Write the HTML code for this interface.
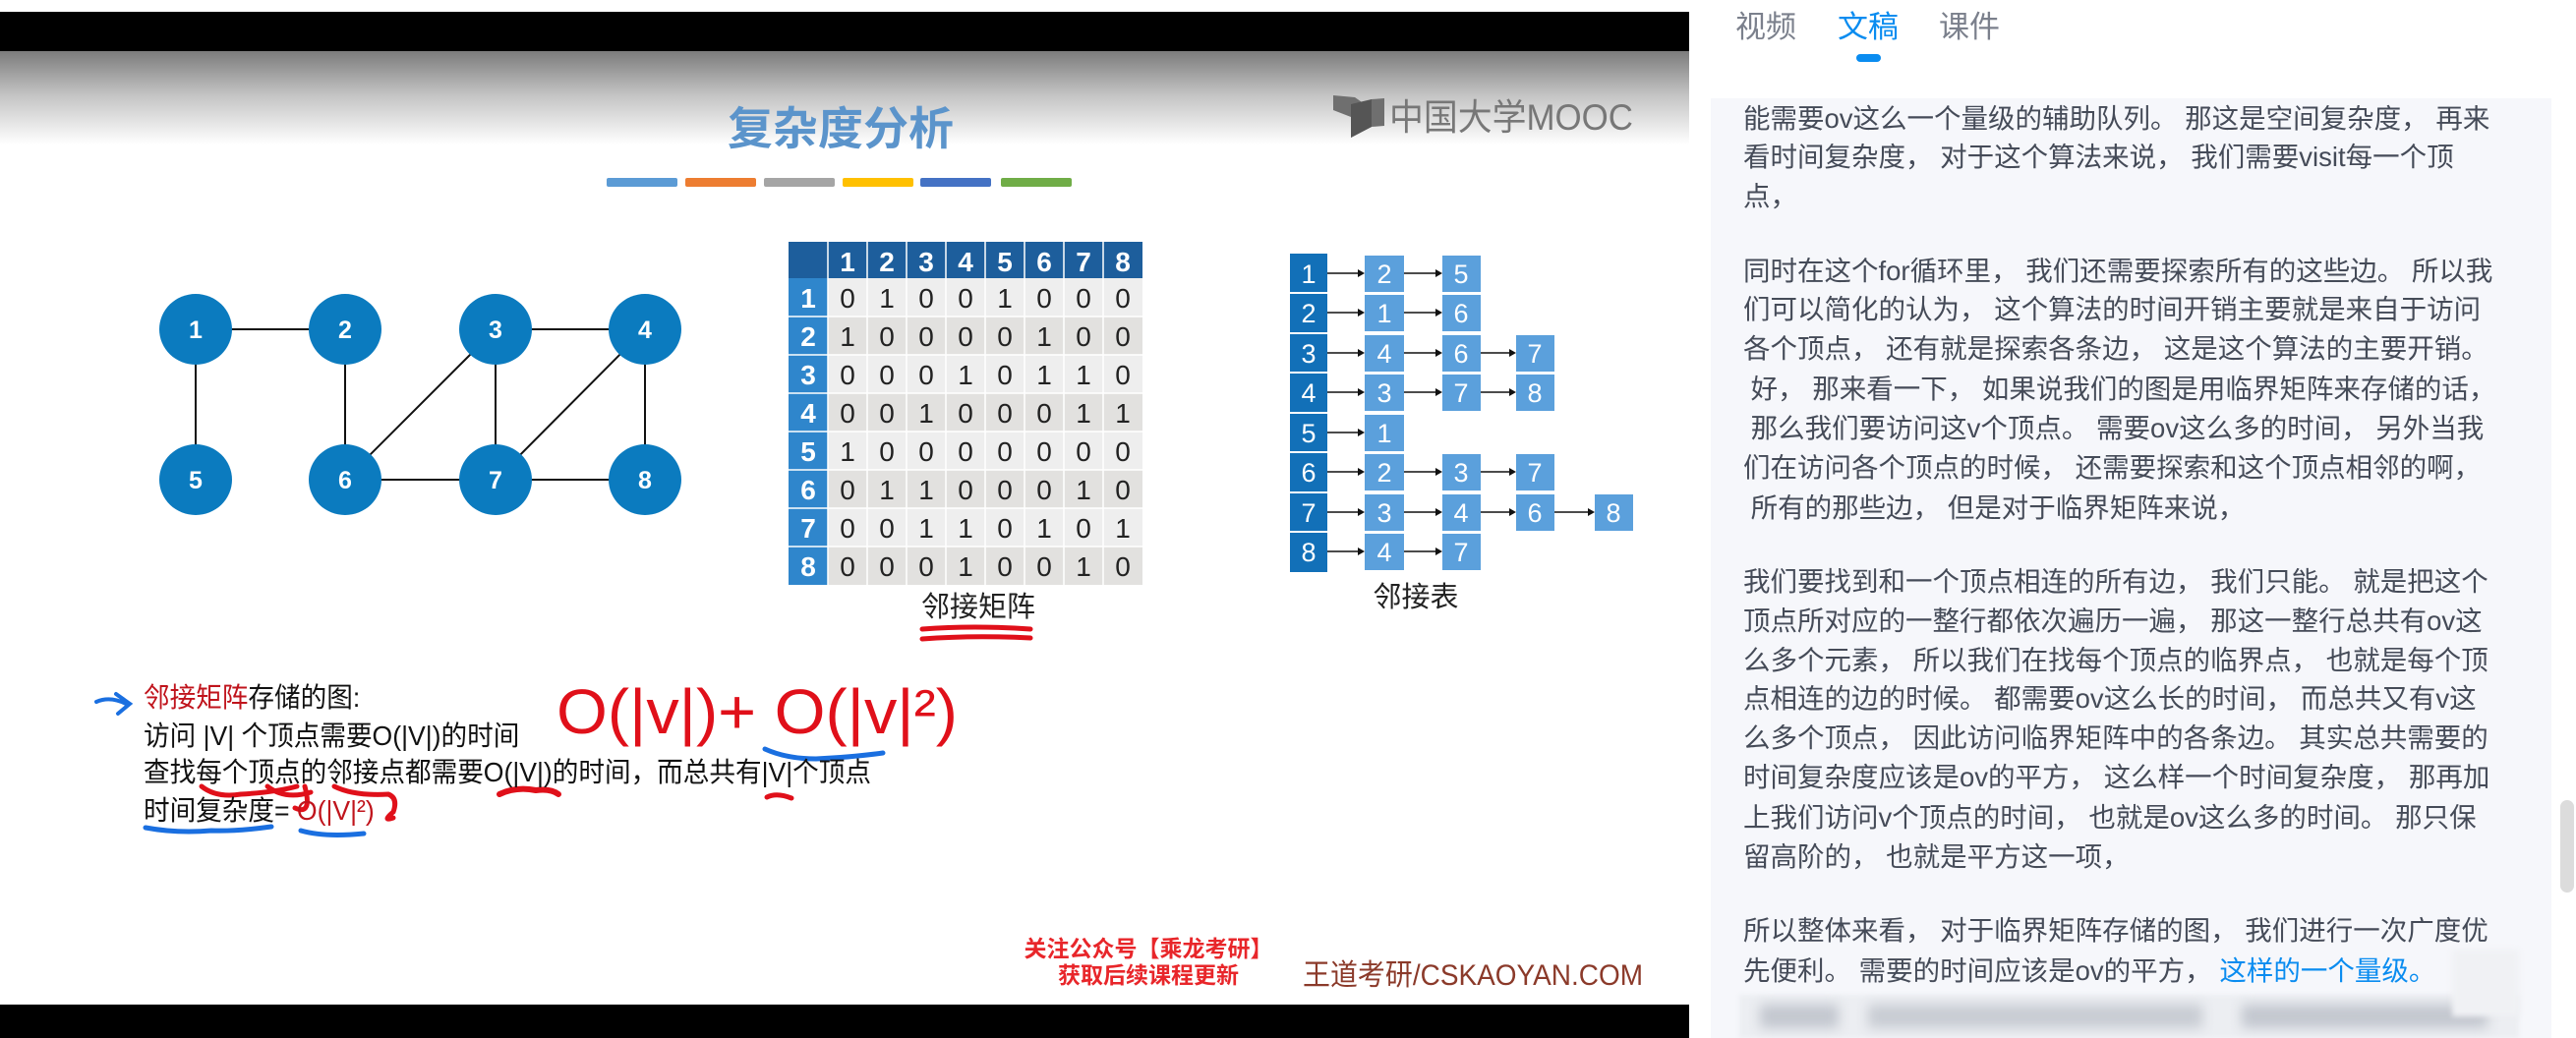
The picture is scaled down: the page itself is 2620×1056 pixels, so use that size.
<!DOCTYPE html>
<html><head><meta charset="utf-8">
<style>
*{margin:0;padding:0;box-sizing:border-box}
body{width:2620px;height:1056px;background:#fff;position:relative;overflow:hidden;font-family:"Liberation Sans","Noto Sans CJK SC",sans-serif}
.abs{position:absolute;white-space:nowrap}
#video{position:absolute;left:0;top:12px;width:1718px;height:1044px;background:#000}
#slide{position:absolute;left:0;top:52px;width:1718px;height:970px;background:linear-gradient(#7c7c7c 0px,#c4c4c4 45px,#fff 95px,#fff)}
.t{font-family:"Liberation Sans","Noto Sans CJK SC",sans-serif;font-size:27.5px;color:#454b58;line-height:40px;position:absolute;left:1773px;white-space:nowrap}
.s{font-size:28px;color:#111;position:absolute;white-space:nowrap;line-height:32px;font-family:"Liberation Sans","Noto Sans CJK SC",sans-serif;transform:scaleX(0.95);transform-origin:left}
</style></head><body>
<div id="video"></div>
<div id="slide"></div>
<svg class="abs" style="left:0;top:0" width="1718" height="1056" font-family="Liberation Sans, Noto Sans CJK SC, sans-serif">
<text x="855" y="147" text-anchor="middle" font-size="46" font-weight="bold" fill="#5b94cb">复杂度分析</text>
<path d="M1356 97 L1378 99 L1388 106 L1395 101 L1408 100 L1408 128 L1395 129 L1374 140 L1374 119 L1356 112 Z" fill="#6f6f6f"/>
<path d="M1374 106 L1395 101 L1395 129 L1374 140 Z" fill="#555"/>
<text x="1413" y="132" font-size="37" fill="#777" textLength="248" lengthAdjust="spacingAndGlyphs">中国大学MOOC</text>
<rect x="617" y="181" width="72" height="9" rx="2" fill="#5b9bd5"/>
<rect x="697" y="181" width="72" height="9" rx="2" fill="#ed7d31"/>
<rect x="777" y="181" width="72" height="9" rx="2" fill="#a5a5a5"/>
<rect x="857" y="181" width="72" height="9" rx="2" fill="#ffc000"/>
<rect x="936" y="181" width="72" height="9" rx="2" fill="#4472c4"/>
<rect x="1018" y="181" width="72" height="9" rx="2" fill="#70ad47"/>
<g stroke="#111" stroke-width="2">
<line x1="199" y1="335" x2="351" y2="335"/><line x1="199" y1="335" x2="199" y2="488"/>
<line x1="351" y1="335" x2="351" y2="488"/><line x1="504" y1="335" x2="656" y2="335"/>
<line x1="504" y1="335" x2="351" y2="488"/><line x1="504" y1="335" x2="504" y2="488"/>
<line x1="656" y1="335" x2="504" y2="488"/><line x1="656" y1="335" x2="656" y2="488"/>
<line x1="351" y1="488" x2="656" y2="488"/>
</g>
<g fill="#0b7bbf">
<ellipse cx="199" cy="335" rx="37" ry="36"/><ellipse cx="351" cy="335" rx="37" ry="36"/>
<ellipse cx="504" cy="335" rx="37" ry="36"/><ellipse cx="656" cy="335" rx="37" ry="36"/>
<ellipse cx="199" cy="488" rx="37" ry="36"/><ellipse cx="351" cy="488" rx="37" ry="36"/>
<ellipse cx="504" cy="488" rx="37" ry="36"/><ellipse cx="656" cy="488" rx="37" ry="36"/>
</g>
<g fill="#fff" font-size="25" font-weight="bold" text-anchor="middle">
<text x="199" y="344">1</text><text x="351" y="344">2</text><text x="504" y="344">3</text><text x="656" y="344">4</text>
<text x="199" y="497">5</text><text x="351" y="497">6</text><text x="504" y="497">7</text><text x="656" y="497">8</text>
</g>
<rect x="802" y="246" width="360" height="37" fill="#1d5e9c"/>
<rect x="802" y="283" width="40" height="312" fill="#2f86cc"/>
<g fill="#eeeeee"><rect x="842" y="283" width="320" height="39"/><rect x="842" y="361" width="320" height="39"/><rect x="842" y="439" width="320" height="39"/><rect x="842" y="517" width="320" height="39"/></g>
<g fill="#e2e1df"><rect x="842" y="322" width="320" height="39"/><rect x="842" y="400" width="320" height="39"/><rect x="842" y="478" width="320" height="39"/><rect x="842" y="556" width="320" height="39"/></g>
<g stroke="#fff" stroke-width="1.5">
<line x1="842" y1="246" x2="842" y2="595"/><line x1="882" y1="246" x2="882" y2="595"/><line x1="922" y1="246" x2="922" y2="595"/><line x1="962" y1="246" x2="962" y2="595"/><line x1="1002" y1="246" x2="1002" y2="595"/><line x1="1042" y1="246" x2="1042" y2="595"/><line x1="1082" y1="246" x2="1082" y2="595"/><line x1="1122" y1="246" x2="1122" y2="595"/>
<line x1="802" y1="322" x2="1162" y2="322"/><line x1="802" y1="361" x2="1162" y2="361"/><line x1="802" y1="400" x2="1162" y2="400"/><line x1="802" y1="439" x2="1162" y2="439"/><line x1="802" y1="478" x2="1162" y2="478"/><line x1="802" y1="517" x2="1162" y2="517"/><line x1="802" y1="556" x2="1162" y2="556"/>
</g>
<g fill="#fff" font-size="28" font-weight="bold" text-anchor="middle">
<text x="862" y="276">1</text><text x="902" y="276">2</text><text x="942" y="276">3</text><text x="982" y="276">4</text><text x="1022" y="276">5</text><text x="1062" y="276">6</text><text x="1102" y="276">7</text><text x="1142" y="276">8</text>
<text x="822" y="313">1</text><text x="822" y="352">2</text><text x="822" y="391">3</text><text x="822" y="430">4</text><text x="822" y="469">5</text><text x="822" y="508">6</text><text x="822" y="547">7</text><text x="822" y="586">8</text>
</g>
<g fill="#222" font-size="28" text-anchor="middle" font-family="Liberation Sans Narrow, Liberation Sans, sans-serif">
<text x="862" y="313">0</text><text x="902" y="313">1</text><text x="942" y="313">0</text><text x="982" y="313">0</text><text x="1022" y="313">1</text><text x="1062" y="313">0</text><text x="1102" y="313">0</text><text x="1142" y="313">0</text>
<text x="862" y="352">1</text><text x="902" y="352">0</text><text x="942" y="352">0</text><text x="982" y="352">0</text><text x="1022" y="352">0</text><text x="1062" y="352">1</text><text x="1102" y="352">0</text><text x="1142" y="352">0</text>
<text x="862" y="391">0</text><text x="902" y="391">0</text><text x="942" y="391">0</text><text x="982" y="391">1</text><text x="1022" y="391">0</text><text x="1062" y="391">1</text><text x="1102" y="391">1</text><text x="1142" y="391">0</text>
<text x="862" y="430">0</text><text x="902" y="430">0</text><text x="942" y="430">1</text><text x="982" y="430">0</text><text x="1022" y="430">0</text><text x="1062" y="430">0</text><text x="1102" y="430">1</text><text x="1142" y="430">1</text>
<text x="862" y="469">1</text><text x="902" y="469">0</text><text x="942" y="469">0</text><text x="982" y="469">0</text><text x="1022" y="469">0</text><text x="1062" y="469">0</text><text x="1102" y="469">0</text><text x="1142" y="469">0</text>
<text x="862" y="508">0</text><text x="902" y="508">1</text><text x="942" y="508">1</text><text x="982" y="508">0</text><text x="1022" y="508">0</text><text x="1062" y="508">0</text><text x="1102" y="508">1</text><text x="1142" y="508">0</text>
<text x="862" y="547">0</text><text x="902" y="547">0</text><text x="942" y="547">1</text><text x="982" y="547">1</text><text x="1022" y="547">0</text><text x="1062" y="547">1</text><text x="1102" y="547">0</text><text x="1142" y="547">1</text>
<text x="862" y="586">0</text><text x="902" y="586">0</text><text x="942" y="586">0</text><text x="982" y="586">1</text><text x="1022" y="586">0</text><text x="1062" y="586">0</text><text x="1102" y="586">1</text><text x="1142" y="586">0</text>
</g>
<text x="995" y="627" text-anchor="middle" font-size="29" fill="#222">邻接矩阵</text>
<path d="M938 640 Q990 636 1048 640 M938 650 Q990 646 1048 649" stroke="#e0101a" stroke-width="5" fill="none" stroke-linecap="round"/>
<rect x="1312" y="258" width="38" height="324" fill="#1270b8"/>
<g stroke="#fff" stroke-width="2"><line x1="1312" y1="298" x2="1350" y2="298"/><line x1="1312" y1="339" x2="1350" y2="339"/><line x1="1312" y1="379" x2="1350" y2="379"/><line x1="1312" y1="420" x2="1350" y2="420"/><line x1="1312" y1="460" x2="1350" y2="460"/><line x1="1312" y1="501" x2="1350" y2="501"/><line x1="1312" y1="541" x2="1350" y2="541"/></g>
<g fill="#fff" font-size="27" text-anchor="middle">
<text x="1331" y="288">1</text><text x="1331" y="328">2</text><text x="1331" y="369">3</text><text x="1331" y="409">4</text><text x="1331" y="450">5</text><text x="1331" y="490">6</text><text x="1331" y="531">7</text><text x="1331" y="571">8</text>
</g>
<g fill="#5ba0dc">
<rect x="1388" y="260" width="40" height="37"/><rect x="1467" y="260" width="39" height="37"/>
<rect x="1388" y="300" width="40" height="37"/><rect x="1467" y="300" width="39" height="37"/>
<rect x="1388" y="341" width="40" height="37"/><rect x="1467" y="341" width="39" height="37"/><rect x="1542" y="341" width="39" height="37"/>
<rect x="1388" y="381" width="40" height="37"/><rect x="1467" y="381" width="39" height="37"/><rect x="1542" y="381" width="39" height="37"/>
<rect x="1388" y="422" width="40" height="37"/>
<rect x="1388" y="462" width="40" height="37"/><rect x="1467" y="462" width="39" height="37"/><rect x="1542" y="462" width="39" height="37"/>
<rect x="1388" y="503" width="40" height="37"/><rect x="1467" y="503" width="39" height="37"/><rect x="1542" y="503" width="39" height="37"/><rect x="1622" y="503" width="39" height="37"/>
<rect x="1388" y="543" width="40" height="37"/><rect x="1467" y="543" width="39" height="37"/>
</g>
<g stroke="#111" stroke-width="1.5">
<line x1="1350" y1="278" x2="1384" y2="278"/><line x1="1428" y1="278" x2="1463" y2="278"/>
<line x1="1350" y1="318" x2="1384" y2="318"/><line x1="1428" y1="318" x2="1463" y2="318"/>
<line x1="1350" y1="359" x2="1384" y2="359"/><line x1="1428" y1="359" x2="1463" y2="359"/><line x1="1506" y1="359" x2="1538" y2="359"/>
<line x1="1350" y1="399" x2="1384" y2="399"/><line x1="1428" y1="399" x2="1463" y2="399"/><line x1="1506" y1="399" x2="1538" y2="399"/>
<line x1="1350" y1="440" x2="1384" y2="440"/>
<line x1="1350" y1="480" x2="1384" y2="480"/><line x1="1428" y1="480" x2="1463" y2="480"/><line x1="1506" y1="480" x2="1538" y2="480"/>
<line x1="1350" y1="521" x2="1384" y2="521"/><line x1="1428" y1="521" x2="1463" y2="521"/><line x1="1506" y1="521" x2="1538" y2="521"/><line x1="1581" y1="521" x2="1618" y2="521"/>
<line x1="1350" y1="561" x2="1384" y2="561"/><line x1="1428" y1="561" x2="1463" y2="561"/>
</g>
<g fill="#111">
<path d="M1388 278 l-7 -4 v8z M1467 278 l-7 -4 v8z M1388 318 l-7 -4 v8z M1467 318 l-7 -4 v8z M1388 359 l-7 -4 v8z M1467 359 l-7 -4 v8z M1542 359 l-7 -4 v8z M1388 399 l-7 -4 v8z M1467 399 l-7 -4 v8z M1542 399 l-7 -4 v8z M1388 440 l-7 -4 v8z M1388 480 l-7 -4 v8z M1467 480 l-7 -4 v8z M1542 480 l-7 -4 v8z M1388 521 l-7 -4 v8z M1467 521 l-7 -4 v8z M1542 521 l-7 -4 v8z M1622 521 l-7 -4 v8z M1388 561 l-7 -4 v8z M1467 561 l-7 -4 v8z"/>
</g>
<g fill="#fff" font-size="27" text-anchor="middle">
<text x="1408" y="288">2</text><text x="1486" y="288">5</text>
<text x="1408" y="328">1</text><text x="1486" y="328">6</text>
<text x="1408" y="369">4</text><text x="1486" y="369">6</text><text x="1561" y="369">7</text>
<text x="1408" y="409">3</text><text x="1486" y="409">7</text><text x="1561" y="409">8</text>
<text x="1408" y="450">1</text>
<text x="1408" y="490">2</text><text x="1486" y="490">3</text><text x="1561" y="490">7</text>
<text x="1408" y="531">3</text><text x="1486" y="531">4</text><text x="1561" y="531">6</text><text x="1641" y="531">8</text>
<text x="1408" y="571">4</text><text x="1486" y="571">7</text>
</g>
<text x="1440" y="617" text-anchor="middle" font-size="29" fill="#222">邻接表</text>
<path d="M98 714 Q112 708 128 716 M118 706 L132 716 L120 726" stroke="#1a6fe0" stroke-width="4" fill="none" stroke-linecap="round"/>
<text x="566" y="746" font-size="64" fill="#e0101a" font-family="Liberation Sans Narrow, Liberation Sans, sans-serif" textLength="408" lengthAdjust="spacingAndGlyphs">O(|v|)+ O(|v|²)</text>
<path d="M778 762 Q800 772 830 772 Q870 770 898 766" stroke="#1a6fe0" stroke-width="5" fill="none" stroke-linecap="round"/>
<path d="M205 800 Q220 812 245 808 Q280 806 302 800 M272 800 Q290 814 316 806 M310 800 Q318 830 300 822" stroke="#e0101a" stroke-width="5" fill="none" stroke-linecap="round"/>
<path d="M340 800 Q360 810 395 808 Q405 812 400 826 Q388 836 400 832" stroke="#e0101a" stroke-width="5" fill="none" stroke-linecap="round"/>
<path d="M508 808 Q525 800 545 804 Q560 802 568 808" stroke="#e0101a" stroke-width="6" fill="none" stroke-linecap="round"/>
<path d="M780 811 Q790 806 805 812" stroke="#e0101a" stroke-width="5" fill="none" stroke-linecap="round"/>
<path d="M148 842 Q180 848 215 845 Q240 846 276 841 M306 845 Q330 852 370 848" stroke="#1a6fe0" stroke-width="5" fill="none" stroke-linecap="round"/>
<text x="1168" y="973" text-anchor="middle" font-size="23" font-weight="bold" fill="#e8262a">关注公众号【乘龙考研】</text>
<text x="1168" y="1000" text-anchor="middle" font-size="23" font-weight="bold" fill="#e8262a">获取后续课程更新</text>
<text x="1325" y="1002" font-size="30" fill="#8b3a2a" textLength="346" lengthAdjust="spacingAndGlyphs">王道考研/CSKAOYAN.COM</text>
</svg>
<div class="s" style="left:146px;top:694px"><span style="color:#c0141c">邻接矩阵</span>存储的图:</div>
<div class="s" style="left:146px;top:733px">访问 |V| 个顶点需要O(|V|)的时间</div>
<div class="s" style="left:146px;top:770px">查找每个顶点的邻接点都需要O(|V|)的时间，而总共有|V|个顶点</div>
<div class="s" style="left:146px;top:809px">时间复杂度= <span style="color:#c0141c">O(|V|²)</span></div>

<div class="abs" style="left:1765px;top:8px;font-size:31px;color:#7b808c;line-height:40px">视频</div>
<div class="abs" style="left:1869px;top:8px;font-size:31px;color:#0a8cf0;line-height:40px">文稿</div>
<div class="abs" style="left:1972px;top:8px;font-size:31px;color:#7b808c;line-height:40px">课件</div>
<div class="abs" style="left:1888px;top:55px;width:25px;height:8px;border-radius:4px;background:#0a8cf0"></div>
<div class="abs" style="left:1740px;top:100px;width:855px;height:956px;background:#f6f7fb"></div>
<div class="abs" style="left:2604px;top:814px;width:14px;height:94px;border-radius:7px;background:#dcdcdc"></div>
<div class="t" style="top:101px">能需要ov这么一个量级的辅助队列。 那这是空间复杂度， 再来</div>
<div class="t" style="top:140px">看时间复杂度， 对于这个算法来说， 我们需要visit每一个顶</div>
<div class="t" style="top:180px">点，</div>
<div class="t" style="top:256px">同时在这个for循环里， 我们还需要探索所有的这些边。 所以我</div>
<div class="t" style="top:295px">们可以简化的认为， 这个算法的时间开销主要就是来自于访问</div>
<div class="t" style="top:335px">各个顶点， 还有就是探索各条边， 这是这个算法的主要开销。</div>
<div class="t" style="top:376px">&nbsp;好， 那来看一下， 如果说我们的图是用临界矩阵来存储的话，</div>
<div class="t" style="top:416px">&nbsp;那么我们要访问这v个顶点。 需要ov这么多的时间， 另外当我</div>
<div class="t" style="top:456px">们在访问各个顶点的时候， 还需要探索和这个顶点相邻的啊，</div>
<div class="t" style="top:497px">&nbsp;所有的那些边， 但是对于临界矩阵来说，</div>
<div class="t" style="top:572px">我们要找到和一个顶点相连的所有边， 我们只能。 就是把这个</div>
<div class="t" style="top:612px">顶点所对应的一整行都依次遍历一遍， 那这一整行总共有ov这</div>
<div class="t" style="top:652px">么多个元素， 所以我们在找每个顶点的临界点， 也就是每个顶</div>
<div class="t" style="top:691px">点相连的边的时候。 都需要ov这么长的时间， 而总共又有v这</div>
<div class="t" style="top:731px">么多个顶点， 因此访问临界矩阵中的各条边。 其实总共需要的</div>
<div class="t" style="top:771px">时间复杂度应该是ov的平方， 这么样一个时间复杂度， 那再加</div>
<div class="t" style="top:812px">上我们访问v个顶点的时间， 也就是ov这么多的时间。 那只保</div>
<div class="t" style="top:852px">留高阶的， 也就是平方这一项，</div>
<div class="t" style="top:927px">所以整体来看， 对于临界矩阵存储的图， 我们进行一次广度优</div>
<div class="t" style="top:968px">先便利。 需要的时间应该是ov的平方， <span style="color:#0a8cf0">这样的一个量级。</span></div>
<div class="abs" style="left:1769px;top:1012px;width:793px;height:44px;background:#eceef2;filter:blur(2px)"></div>
<div class="abs" style="left:1790px;top:1022px;width:80px;height:24px;background:#c3c7cf;filter:blur(6px)"></div>
<div class="abs" style="left:1900px;top:1022px;width:340px;height:24px;background:#c8ccd3;filter:blur(6px)"></div>
<div class="abs" style="left:2280px;top:1022px;width:250px;height:24px;background:#c3c7cf;filter:blur(6px)"></div>
<div class="abs" style="left:2494px;top:966px;width:68px;height:68px;background:#f0f1f4;filter:blur(3px)"></div>
</body></html>
